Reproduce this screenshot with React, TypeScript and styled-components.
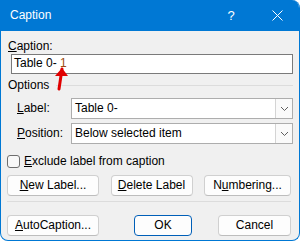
import React from "react";
import styled, { createGlobalStyle } from "styled-components";

const GlobalStyle = createGlobalStyle`
  html, body {
    margin: 0;
    padding: 0;
    background: #ffffff;
  }
  body {
    font-family: "Liberation Sans", Arial, sans-serif;
    font-size: 12px;
  }
`;

const Janela = styled.div`
  position: relative;
  width: 300px;
  height: 241px;
  box-sizing: border-box;
  border: 1px solid #0078d4;
  border-top: none;
  border-radius: 0 8px 8px 8px;
  overflow: hidden;
  background: #f0f0f0;
  display: flex;
  flex-direction: column;
`;

const BarraTitulo = styled.div`
  height: 31px;
  background: #0078d4;
  color: #ffffff;
  display: flex;
  align-items: center;
  margin: 0 -1px;
`;

const Titulo = styled.div`
  flex: 1;
  padding-left: 10px;
  font-size: 12px;
  line-height: 31px;
`;

const BotaoTitulo = styled.div`
  width: 46px;
  height: 31px;
  display: flex;
  align-items: center;
  justify-content: center;
  font-size: 13px;
  color: #ffffff;
`;

const Corpo = styled.div`
  flex: 1;
  padding: 8px 6px 0 6px;
  display: flex;
  flex-direction: column;
  color: #000000;
`;

const Rotulo = styled.div<{ $recuo?: number; $largura?: number }>`
  line-height: 15px;
  margin-left: ${(p) => p.$recuo ?? 0}px;
  width: ${(p) => (p.$largura ? `${p.$largura}px` : "auto")};
  flex-shrink: 0;
`;

const Atalho = styled.span`
  text-decoration: underline;
  text-underline-offset: 1px;
`;

const CampoTexto = styled.div`
  margin-left: 4px;
  height: 20px;
  box-sizing: border-box;
  border: 1px solid #7a7a7a;
  background: #ffffff;
  padding: 0 2px;
  line-height: 17px;
  font-size: 12px;
`;

const Numero = styled.span`
  color: #9a4a10;
`;

const Grupo = styled.div`
  margin-top: 4px;
  display: flex;
  align-items: center;
  gap: 7px;
`;

const LinhaGrupo = styled.div`
  flex: 1;
  height: 1px;
  background: #dcdcdc;
  margin-top: -1px;
`;

const LinhaCampo = styled.div<{ $topo: number }>`
  margin-top: ${(p) => p.$topo}px;
  display: flex;
  align-items: center;
`;

const Lista = styled.div`
  flex: 1;
  height: 21px;
  box-sizing: border-box;
  border: 1px solid #adadad;
  background: #ffffff;
  display: flex;
  align-items: stretch;
`;

const ListaTexto = styled.div`
  flex: 1;
  padding-left: 3px;
  line-height: 19px;
`;

const ListaBotao = styled.div`
  width: 16px;
  border-left: 1px solid #d4d4d4;
  background: #fafafa;
  display: flex;
  align-items: center;
  justify-content: center;
`;

const Marcador = styled.div`
  width: 13px;
  height: 13px;
  box-sizing: border-box;
  border: 1px solid #6e6e6e;
  border-radius: 3px;
  background: #f8f8f8;
  margin-right: 4px;
`;

const FileiraBotoes = styled.div<{ $topo: number }>`
  margin-top: ${(p) => p.$topo}px;
  margin-right: 2px;
  display: flex;
  justify-content: space-between;
`;

const Botao = styled.div<{ $largura: number; $padrao?: boolean }>`
  width: ${(p) => p.$largura}px;
  height: 21px;
  box-sizing: border-box;
  border: 1px solid ${(p) => (p.$padrao ? "#005fb8" : "#d0d0d0")};
  border-bottom-color: ${(p) => (p.$padrao ? "#005fb8" : "#bdbdbd")};
  border-radius: 4px;
  background: #fdfdfd;
  text-align: center;
  line-height: 19px;
`;

const Espaco = styled.div`
  flex: 1;
`;

const Separador = styled.div`
  margin-top: 5px;
  margin-right: 2px;
  height: 1px;
  background: #dcdcdc;
`;

const Seta = styled.svg`
  position: absolute;
  left: 50px;
  top: 64px;
`;

function Chevron() {
  return (
    <svg width="9" height="6" viewBox="0 0 9 6">
      <path d="M1 1 L4.5 4.5 L8 1" fill="none" stroke="#5f5f5f" strokeWidth="1" />
    </svg>
  );
}

export default function App() {
  return (
    <>
      <GlobalStyle />
      <Janela>
        <BarraTitulo>
          <Titulo>Caption</Titulo>
          <BotaoTitulo>?</BotaoTitulo>
          <BotaoTitulo>
            <svg width="11" height="11" viewBox="0 0 11 11">
              <path d="M0.5 0.5 L10.5 10.5 M10.5 0.5 L0.5 10.5" stroke="#ffffff" strokeWidth="1" />
            </svg>
          </BotaoTitulo>
        </BarraTitulo>
        <Corpo>
          <Rotulo $recuo={1}>
            <Atalho>C</Atalho>aption:
          </Rotulo>
          <CampoTexto>
            Table 0- <Numero>1</Numero>
          </CampoTexto>
          <Grupo>
            <Rotulo $recuo={1}>Options</Rotulo>
            <LinhaGrupo />
          </Grupo>
          <LinhaCampo $topo={5}>
            <Rotulo $recuo={10} $largura={54}>
              <Atalho>L</Atalho>abel:
            </Rotulo>
            <Lista>
              <ListaTexto>Table 0-</ListaTexto>
              <ListaBotao>
                <Chevron />
              </ListaBotao>
            </Lista>
          </LinhaCampo>
          <LinhaCampo $topo={4}>
            <Rotulo $recuo={10} $largura={54}>
              <Atalho>P</Atalho>osition:
            </Rotulo>
            <Lista>
              <ListaTexto>Below selected item</ListaTexto>
              <ListaBotao>
                <Chevron />
              </ListaBotao>
            </Lista>
          </LinhaCampo>
          <LinhaCampo $topo={10}>
            <Marcador />
            <Rotulo>
              <Atalho>E</Atalho>xclude label from caption
            </Rotulo>
          </LinhaCampo>
          <FileiraBotoes $topo={6}>
            <Botao $largura={92}>
              <Atalho>N</Atalho>ew Label...
            </Botao>
            <Botao $largura={82}>
              <Atalho>D</Atalho>elete Label
            </Botao>
            <Botao $largura={87}>
              N<Atalho>u</Atalho>mbering...
            </Botao>
          </FileiraBotoes>
          <Separador />
          <FileiraBotoes $topo={13}>
            <Botao $largura={92}>
              <Atalho>A</Atalho>utoCaption...
            </Botao>
            <Espaco />
            <Botao $largura={58} $padrao>
              OK
            </Botao>
            <Botao $largura={73} style={{ marginLeft: 26 }}>
              Cancel
            </Botao>
          </FileiraBotoes>
        </Corpo>
        <Seta width="20" height="30" viewBox="0 0 20 30">
          <path d="M11 5 L8 25" stroke="#e00000" strokeWidth="3" strokeLinecap="round" fill="none" />
          <path d="M11 4 L4 12 L17 12 Z" fill="#e00000" />
        </Seta>
      </Janela>
    </>
  );
}
